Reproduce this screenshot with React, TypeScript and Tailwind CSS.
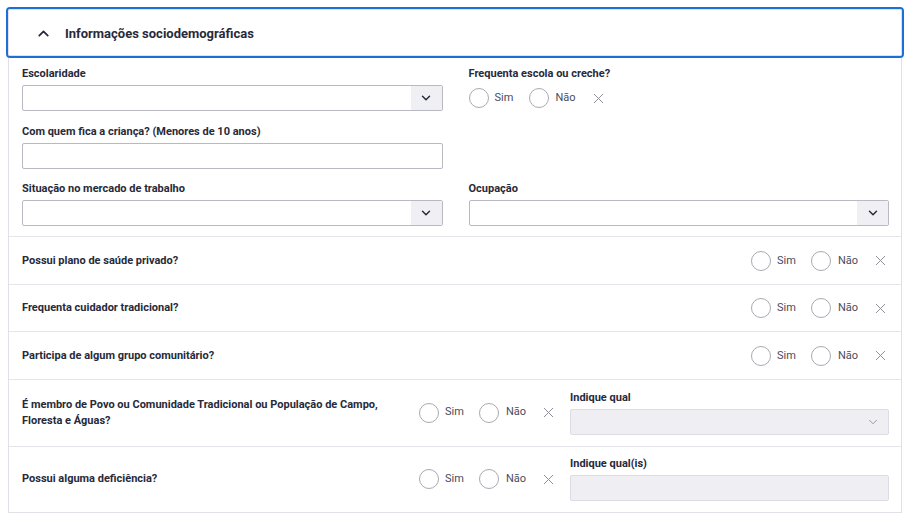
import { ChevronUp, ChevronDown, X } from 'lucide-react';

const font = { fontFamily: 'Roboto, "Noto Sans", sans-serif' };

function Label({ children }: { children: React.ReactNode }) {
  return <div className="text-[11px] font-bold text-[#272a3a] leading-[14px] mb-[4px]">{children}</div>;
}

function SelectBox({ disabled }: { disabled?: boolean }) {
  return (
    <div className={`h-[26px] flex border rounded-[2px] ${disabled ? 'bg-[#efeff3] border-[#dcdce2]' : 'bg-white border-[#b9b9c3]'}`}>
      <div className="flex-1" />
      <div className={`w-[31px] flex items-center justify-center ${disabled ? '' : 'bg-[#f0f0f4]'}`}>
        <ChevronDown size={14} strokeWidth={disabled ? 1.5 : 2.5} className={disabled ? 'text-[#8a8a96]' : 'text-[#272a3a]'} />
      </div>
    </div>
  );
}

function TextBox({ disabled }: { disabled?: boolean }) {
  return <div className={`h-[26px] border rounded-[2px] ${disabled ? 'bg-[#efeff3] border-[#dcdce2]' : 'bg-white border-[#b9b9c3]'}`} />;
}

function Radios() {
  return (
    <div className="flex items-center text-[11px] text-[#4a4c5a]">
      <span className="w-[20px] h-[20px] rounded-full border border-[#a9a9b3] bg-white" />
      <span className="ml-[6px] w-[28px]">Sim</span>
      <span className="ml-[6px] w-[20px] h-[20px] rounded-full border border-[#a9a9b3] bg-white" />
      <span className="ml-[7px] w-[28px]">Não</span>
      <X size={17} strokeWidth={1.4} className="ml-[6px] text-[#8e8e98]" />
    </div>
  );
}

function Row({ text }: { text: string }) {
  return (
    <div className="h-[47.5px] border-t border-[#e4e4ea] flex items-center justify-between pl-[13px] pr-[12px] pt-[1px]">
      <span className="text-[11px] font-bold text-[#272a3a]">{text}</span>
      <Radios />
    </div>
  );
}

export default function App() {
  return (
    <div className="w-[910px] h-[514px] bg-white pt-[7px] px-[6px]" style={font}>
      <div className="border-[2px] border-[#1c6fd6] rounded-[4px]">
        <div className="h-[47px] border border-[#e0e0e6] rounded-[2px] flex items-center pl-[26px] pt-[2px]">
          <ChevronUp size={17} strokeWidth={2.5} className="text-[#272a3a]" />
          <span className="ml-[13px] text-[13px] font-bold text-[#272a3a]">Informações sociodemográficas</span>
        </div>
      </div>
      <div className="mx-[2px] border-x border-b border-[#e0e0e6]">
        <div className="pl-[13px] pr-[12px] pt-[9px] pb-[10px] grid grid-cols-2 gap-x-[26px]">
          <div>
            <Label>Escolaridade</Label>
            <SelectBox />
          </div>
          <div>
            <Label>Frequenta escola ou creche?</Label>
            <div className="pt-[3px]"><Radios /></div>
          </div>
          <div className="mt-[14px]">
            <Label>Com quem fica a criança? (Menores de 10 anos)</Label>
            <TextBox />
          </div>
          <div />
          <div className="mt-[13px]">
            <Label>Situação no mercado de trabalho</Label>
            <SelectBox />
          </div>
          <div className="mt-[13px]">
            <Label>Ocupação</Label>
            <SelectBox />
          </div>
        </div>
        <Row text="Possui plano de saúde privado?" />
        <Row text="Frequenta cuidador tradicional?" />
        <Row text="Participa de algum grupo comunitário?" />
        <div className="h-[67px] border-t border-[#e4e4ea] flex items-center pl-[13px] pr-[12px]">
          <span className="w-[397px] text-[11px] font-bold text-[#272a3a] leading-[16px]">
            É membro de Povo ou Comunidade Tradicional ou População de Campo, Floresta e Águas?
          </span>
          <div className="w-[151px]"><Radios /></div>
          <div className="flex-1 pt-[1px]">
            <Label>Indique qual</Label>
            <SelectBox disabled />
          </div>
        </div>
        <div className="h-[66px] border-t border-[#e4e4ea] flex items-center pl-[13px] pr-[12px]">
          <span className="w-[397px] text-[11px] font-bold text-[#272a3a]">Possui alguma deficiência?</span>
          <div className="w-[151px]"><Radios /></div>
          <div className="flex-1">
            <Label>Indique qual(is)</Label>
            <TextBox disabled />
          </div>
        </div>
      </div>
    </div>
  );
}
